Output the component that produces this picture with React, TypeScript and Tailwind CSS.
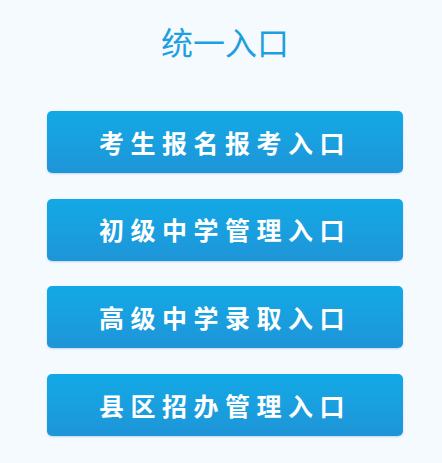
export default function App() {
  const items = ["考生报名报考入口", "初级中学管理入口", "高级中学录取入口", "县区招办管理入口"];
  return (
    <div
      className="w-[442px] h-[463px] bg-[#f5faff] flex flex-col items-center pt-[25px] pl-[8px]"
      style={{ fontFamily: '"Noto Sans CJK SC", "Noto Sans", sans-serif' }}
    >
      <div className="text-[32px] leading-none text-[#1e9fe0] font-normal">统一入口</div>
      <div className="mt-[54px] flex flex-col gap-[25.7px]">
        {items.map((t) => (
          <div
            key={t}
            className="w-[356px] h-[62px] rounded-[5px] bg-gradient-to-b from-[#12a9e6] to-[#1e95d8] flex items-center justify-center shadow-[0_1px_2px_rgba(30,120,190,0.25)]"
          >
            <span className="text-white text-[25px] font-bold leading-none tracking-[6.5px]">{t}</span>
          </div>
        ))}
      </div>
    </div>
  );
}
